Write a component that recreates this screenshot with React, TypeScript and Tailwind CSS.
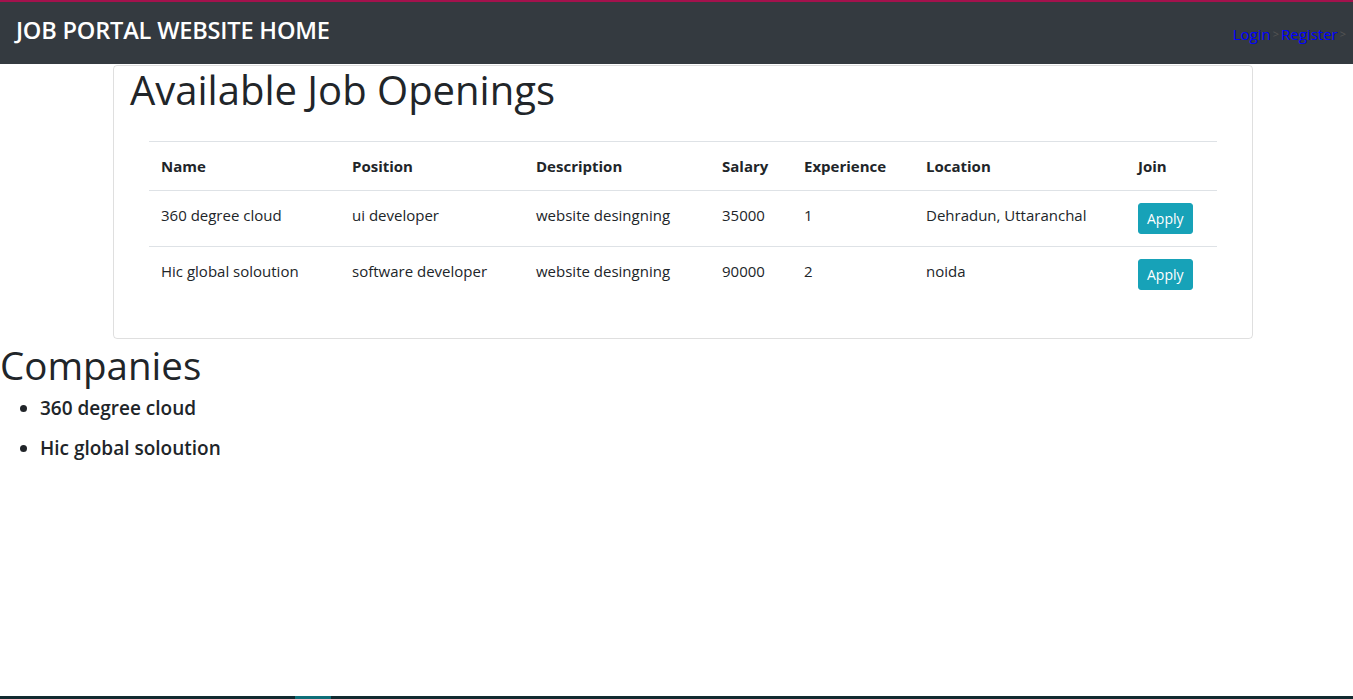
import React from 'react';

const jobs = [
  { name: '360 degree cloud', position: 'ui developer', description: 'website desingning', salary: '35000', experience: '1', location: 'Dehradun, Uttaranchal' },
  { name: 'Hic global soloution', position: 'software developer', description: 'website desingning', salary: '90000', experience: '2', location: 'noida' },
];

const cols = ['w-[191px]', 'w-[184px]', 'w-[186px]', 'w-[82px]', 'w-[122px]', 'w-[212px]', ''];

export default function App() {
  return (
    <div className="min-h-[699px] flex flex-col bg-white text-[#212529] font-['Segoe_UI','Open_Sans',sans-serif]">
      {/* Navbar */}
      <div className="h-[64px] shrink-0 bg-[#343a40] border-t-2 border-[#a3124d] flex items-center justify-between pl-4 pr-[6px]">
        <h3 className="text-white text-[23.6px] font-semibold tracking-[-0.2px] -mt-[4px]">JOB PORTAL WEBSITE HOME</h3>
        <div className="flex items-center text-[15px] mt-[3px] mr-[1px]">
          <a href="#" className="text-[#0000ff]">Login</a>
          <span className="text-[#555] text-[11px] mx-[2px]">&gt;</span>
          <a href="#" className="text-[#0000ff]">Register</a>
          <span className="text-[#555] text-[11px] ml-[2px]">&gt;</span>
        </div>
      </div>

      {/* Job openings card */}
      <div className="ml-[113px] mt-[1px] w-[1140px] border border-[rgba(0,0,0,0.125)] rounded-[4px] pl-4 pr-[35px] pb-[36px]">
        <h1 className="text-[40px] leading-[48px] font-medium mb-[27px]">Available Job Openings</h1>
        <table className="ml-[19px] w-[1068px] text-[15px] border-collapse">
          <thead>
            <tr className="border-t border-b border-[#dee2e6]">
              {['Name', 'Position', 'Description', 'Salary', 'Experience', 'Location', 'Join'].map((h, i) => (
                <th key={h} className={`${cols[i]} text-left font-bold p-3 leading-6 align-bottom`}>{h}</th>
              ))}
            </tr>
          </thead>
          <tbody>
            {jobs.map((j, r) => (
              <tr key={j.name} className={r > 0 ? 'border-t border-[#dee2e6]' : ''}>
                <td className="p-3 align-top leading-6">{j.name}</td>
                <td className="p-3 align-top leading-6">{j.position}</td>
                <td className="p-3 align-top leading-6">{j.description}</td>
                <td className="p-3 align-top leading-6">{j.salary}</td>
                <td className="p-3 align-top leading-6">{j.experience}</td>
                <td className="p-3 align-top leading-6">{j.location}</td>
                <td className="p-3 align-top leading-6">
                  <button className="block bg-[#17a2b8] text-white text-[14px] leading-[21px] px-2 py-1 rounded-[3px] border border-[#17a2b8]">Apply</button>
                </td>
              </tr>
            ))}
          </tbody>
        </table>
      </div>

      {/* Companies */}
      <h1 className="text-[38.5px] leading-[46px] font-medium mt-[3px]">Companies</h1>
      <ul className="list-disc pl-10 mt-[8px]">
        <li className="text-[19px] font-semibold leading-6 mb-4">360 degree cloud</li>
        <li className="text-[19px] font-semibold leading-6">Hic global soloution</li>
      </ul>

      <div className="flex-1" />
      <div className="h-[3px] flex shrink-0 bg-[#112a30]">
        <div className="w-[295px]" />
        <div className="w-[36px] bg-[#0e6e78]" />
      </div>
    </div>
  );
}
